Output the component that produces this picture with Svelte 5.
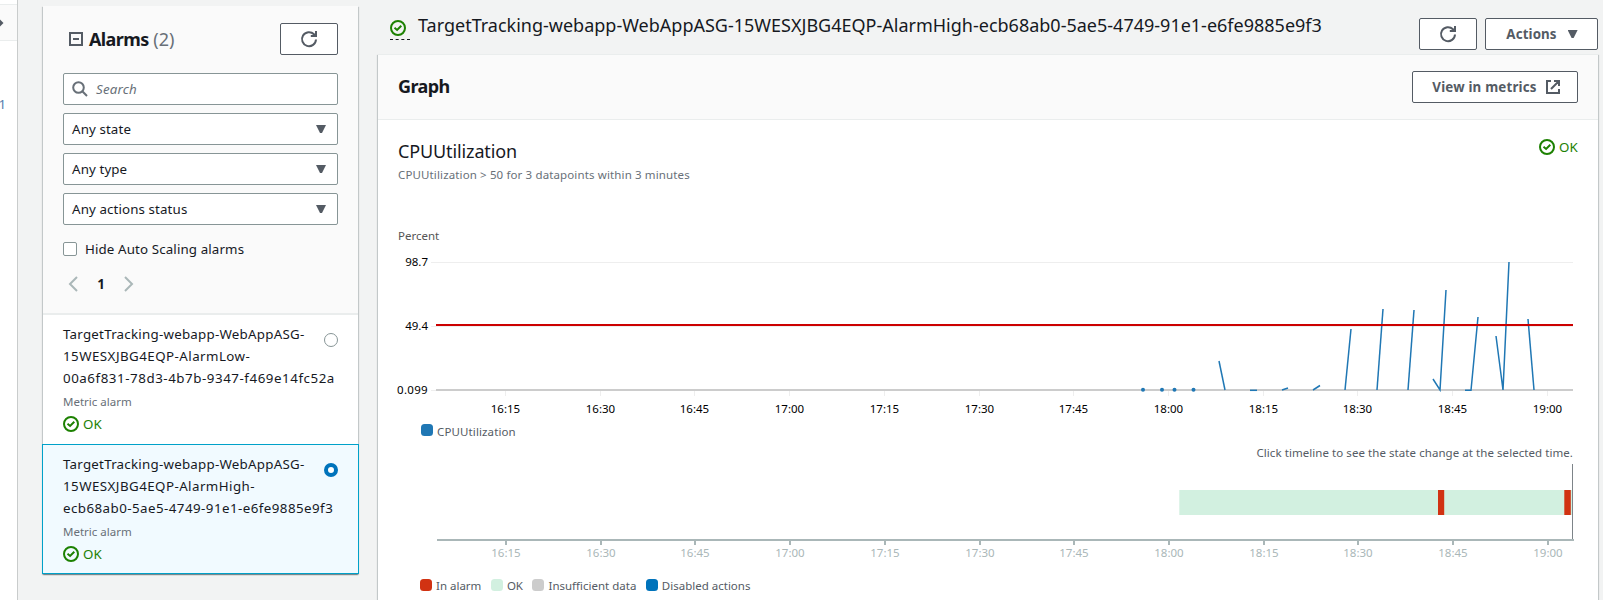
<script>
  const filters = ['Any state', 'Any type', 'Any actions status'];
  const alarms = [
    {
      lines: [
        { text: 'TargetTracking-webapp-WebAppASG-', track: 0.24 },
        { text: '15WESXJBG4EQP-AlarmLow-', track: 0.45 },
        { text: '00a6f831-78d3-4b7b-9347-f469e14fc52a', track: 0.55 }
      ],
      selected: false
    },
    {
      lines: [
        { text: 'TargetTracking-webapp-WebAppASG-', track: 0.24 },
        { text: '15WESXJBG4EQP-AlarmHigh-', track: 0.44 },
        { text: 'ecb68ab0-5ae5-4749-91e1-e6fe9885e9f3', track: 0.45 }
      ],
      selected: true
    }
  ];
  const labels = ['16:15', '16:30', '16:45', '17:00', '17:15', '17:30', '17:45', '18:00', '18:15', '18:30', '18:45', '19:00'];
  const ticks = labels.map((label, i) => ({ label, x: Math.floor(505.4 + i * 94.72) + 0.5 }));
  const series = [
    'M1219 361L1225 390', 'M1250 390.3H1257', 'M1282 390L1288 388', 'M1313 390L1320 385.5',
    'M1345 390L1351 329', 'M1377 390L1383 309', 'M1408 390L1414 310', 'M1433 379L1440 390L1446 290',
    'M1465 390.3H1471L1478 317', 'M1496 336L1503 390L1509 262', 'M1528 319L1534 390'
  ];
  const dots = [1143, 1162, 1174.5, 1193.5];
  const states = [
    { name: 'In alarm', color: '#d13212' },
    { name: 'OK', color: '#d2f0e0' },
    { name: 'Insufficient data', color: '#cccccc' },
    { name: 'Disabled actions', color: '#0073bb' }
  ];
</script>

{#snippet okIcon()}
  <svg class="ok-icon" width="16" height="16" viewBox="0 0 16 16" fill="none" stroke="#1d8102" stroke-width="2"><circle cx="8" cy="8" r="7" /><path d="M4.5 7.8l2.6 2.2L11.3 5.8" /></svg>
{/snippet}
{#snippet refreshIcon()}
  <svg width="18" height="18" viewBox="0 0 18 18" fill="none" stroke="#545b64" stroke-width="2"><path d="M16 9.5A7 7 0 1 1 14 4.3L15.4 5.7" /><path d="M16 1v5H10.8" /></svg>
{/snippet}

<div class="page">
  <div class="nav">
    <div class="nav-head"><svg width="4" height="8" viewBox="0 0 4 8"><path d="M0 0.5L3.5 4L0 7.5z" fill="#545b64" /></svg></div>
    <span class="nav-count">1</span>
  </div>

  <aside class="panel">
    <div class="panel-head">
      <div class="title-row">
        <svg width="14" height="14" viewBox="0 0 14 14" fill="none" stroke="#545b64" stroke-width="2"><path d="M1 1h12v12H1zM4 7h6" /></svg>
        <h2><span class="tight">Alarms</span> <span class="count">(2)</span></h2>
        <button class="btn refresh">{@render refreshIcon()}</button>
      </div>
      <div class="field search">
        <svg width="16" height="16" viewBox="0 0 16 16" fill="none" stroke="#687078" stroke-width="2"><circle cx="6.5" cy="6.5" r="5.3" /><path d="M10.3 10.3L15 15" /></svg>
        <span>Search</span>
      </div>
      {#each filters as f}
        <div class="field select"><span>{f}</span><i class="caret"></i></div>
      {/each}
      <div class="check"><i></i><span>Hide Auto Scaling alarms</span></div>
      <div class="pager">
        <svg width="10" height="16" viewBox="0 0 10 16" fill="none" stroke="#aab7b8" stroke-width="2"><path d="M9 1L2 8l7 7" /></svg>
        <b>1</b>
        <svg width="10" height="16" viewBox="0 0 10 16" fill="none" stroke="#aab7b8" stroke-width="2"><path d="M1 1l7 7-7 7" /></svg>
      </div>
    </div>
    {#each alarms as a}
      <div class="alarm" class:selected={a.selected}>
        <div class="name">{#each a.lines as line}<div style:letter-spacing="{line.track}px">{line.text}</div>{/each}</div>
        <i class="radio"></i>
        <div class="kind">Metric alarm</div>
        <div class="status">{@render okIcon()}<span>OK</span></div>
      </div>
    {/each}
  </aside>

  <main>
    <header>
      <span class="state">{@render okIcon()}</span>
      <h1>TargetTracking-webapp-WebAppASG-15WESXJBG4EQP-AlarmHigh-ecb68ab0-5ae5-4749-91e1-e6fe9885e9f3</h1>
      <button class="btn refresh">{@render refreshIcon()}</button>
      <button class="btn actions"><span>Actions</span><i class="caret"></i></button>
    </header>
    <section class="card">
      <div class="card-head">
        <h2 class="tight">Graph</h2>
        <button class="btn metrics"><span>View in metrics</span>
          <svg width="14" height="14" viewBox="0 0 14 14" fill="none" stroke="#545b64" stroke-width="2"><path d="M5 1H1v12h12V9M8 1h5v5M13 1L5 9" /></svg>
        </button>
      </div>
      <div class="metric-row">
        <div>
          <h3>CPUUtilization</h3>
          <p>CPUUtilization &gt; 50 for 3 datapoints within 3 minutes</p>
        </div>
        <div class="status">{@render okIcon()}<span>OK</span></div>
      </div>
      <svg class="chart" width="1220" height="195" viewBox="378 225 1220 195">
        <text class="unit" x="398" y="240">Percent</text>
        <path d="M431 262.5H1573M431 326.5H1573M431 390.5H436" stroke="#eee" />
        <path d="M436 390H1573" stroke="#ccc" stroke-width="2" />
        {#each ticks as t}
          <path d="M{t.x} 391v5" stroke="#eee" />
          <text x={t.x} y="413" text-anchor="middle">{t.label}</text>
        {/each}
        <g text-anchor="end">
          <text x="428" y="266">98.7</text>
          <text x="428" y="330">49.4</text>
          <text class="wide" x="428" y="394">0.099</text>
        </g>
        {#each series as d}<path {d} fill="none" stroke="#1f77b4" stroke-width="1.5" />{/each}
        {#each dots as x}<circle cx={x} cy="389.8" r="2" fill="#1f77b4" />{/each}
        <path d="M436 325H1573" stroke="#c00" stroke-width="2" />
      </svg>
      <div class="legend one"><span><i style:background="#1f77b4"></i><em>CPUUtilization</em></span></div>
      <div class="hint">Click timeline to see the state change at the selected time.</div>
      <svg class="timeline" width="1220" height="100" viewBox="378 464 1220 100">
        <path d="M1179.3 490H1573v25H1179.3z" fill="#d2f0e0" />
        <path d="M1438 490h6.2v25h-6.2zM1564.3 490h6.5v25h-6.5z" fill="#d13212" />
        <path d="M1572.5 464v75" stroke="#7d8489" />
        <path d="M437 540H1574" stroke="#aab7b8" stroke-width="2" />
        {#each ticks as t}
          <path d="M{t.x + 0.5} 541v4" stroke="#aab7b8" stroke-width="2" />
          <text x={t.x + 0.5} y="557" text-anchor="middle">{t.label}</text>
        {/each}
      </svg>
      <div class="legend">
        {#each states as s}<span><i style:background={s.color}></i><em>{s.name}</em></span>{/each}
      </div>
    </section>
  </main>
</div>

<style>
  :global(body) { margin: 0; }
  * { box-sizing: border-box; }
  .page { display: flex; width: 1603px; height: 600px; overflow: hidden; background: #f2f3f3; color: #16191f; font: 13.33px/22px "Noto Sans", sans-serif; }
  h1, h2, h3, p { margin: 0; font-weight: 400; }
  .nav { width: 18px; height: 600px; background: #fff; border-right: 1px solid #c9cccc; padding-top: 4px; flex: none; overflow: hidden; }
  .nav-head { height: 37px; background: #fafafa; border: solid #eaeded; border-width: 1px 0; display: flex; align-items: center; }
  .nav-count { display: block; margin: 52px 0 0 -1.5px; color: #5a7fae; }
  .panel, .card { background: #fff; box-shadow: 0 1px 1px 0 rgba(0,28,36,.3), 1px 1px 1px 0 rgba(0,28,36,.15), -1px 1px 1px 0 rgba(0,28,36,.15); }
  .panel { flex: none; align-self: flex-start; width: 315px; height: 568px; margin: 6px 0 0 25px; }
  .panel-head { height: 309px; padding: 17px 20px 0; background: #fafafa; border-bottom: 2px solid #eaeded; }
  .title-row { display: flex; align-items: center; height: 32px; margin-bottom: 18px; padding-left: 6px; }
  .title-row h2 { margin: 0 auto 0 6px; font-size: 18px; font-weight: 700; }
  .tight { letter-spacing: -.6px; }
  .count { font-weight: 400; color: #687078; }
  .btn { display: flex; align-items: center; justify-content: center; height: 32px; padding: 0; border: 1px solid #545b64; border-radius: 2px; background: #fff; color: #545b64; font: 700 13.33px "Noto Sans", sans-serif; flex: none; }
  .refresh { width: 58px; }
  .field { display: flex; align-items: center; height: 32px; margin-bottom: 8px; border: 1px solid #879596; border-radius: 2px; background: #fff; padding: 0 11px 0 8px; justify-content: space-between; letter-spacing: .11px; }
  .search { justify-content: flex-start; gap: 8px; color: #687078; font-style: italic; letter-spacing: .2px; }
  .caret { width: 10px; height: 8px; background: #545b64; clip-path: polygon(0 0, 100% 0, 60% 100%, 40% 100%); }
  .check { display: flex; align-items: center; gap: 8px; height: 22px; margin-top: 13px; letter-spacing: .12px; }
  .check i { width: 14px; height: 14px; border: 1px solid #879596; border-radius: 2px; background: #fff; }
  .pager { display: flex; align-items: center; justify-content: space-between; width: 66px; height: 22px; margin: 13px 0 0 5px; }
  .alarm { position: relative; height: 129px; padding: 8px 20px 0; }
  .alarm.selected { height: 130px; margin: 0 -1px; border: 1px solid #00a1c9; background: #f1faff; }
  .name { white-space: nowrap; }
  .radio { position: absolute; right: 20px; top: 18px; width: 14px; height: 14px; border: 1px solid #879596; border-radius: 50%; background: #fff; }
  .selected .radio { border: 4px solid #0073bb; }
  .kind { margin-top: 2px; font-size: 11.5px; color: #687078; }
  .status { display: flex; align-items: center; gap: 4px; color: #1d8102; letter-spacing: .2px; }
  .ok-icon { display: block; flex: none; }
  main { flex: none; width: 1221px; margin-left: 19px; }
  header { display: flex; width: 1221px; height: 54px; padding: 18px 0 0 13px; align-items: flex-start; }
  .state { width: 20px; height: 22px; padding-top: 2px; border-bottom: 1px dashed #16191f; }
  h1 { margin: -4px auto 0 8px; font-size: 18px; white-space: nowrap; }
  .actions { width: 113px; margin-left: 8px; padding-left: 1px; gap: 11px; letter-spacing: .1px; }
  .card { width: 1220px; margin-left: 1px; height: 560px; border-top: 1px solid #eaeded; }
  .card-head { display: flex; height: 65px; align-items: center; justify-content: space-between; padding: 0 20px; background: #fafafa; border-bottom: 1px solid #eaeded; }
  .card-head h2 { font-size: 18px; font-weight: 700; margin-top: -2px; }
  .metrics { width: 166px; padding-left: 2px; gap: 9px; letter-spacing: .19px; }
  .metric-row { display: flex; justify-content: space-between; padding: 16px 20px 0; height: 105px; }
  .metric-row .status { height: 22px; }
  h3 { font-size: 18px; line-height: 30px; letter-spacing: -.12px; }
  p { font-size: 11.5px; line-height: 18px; color: #687078; letter-spacing: .13px; }
  .chart, .timeline { display: block; }
  svg text { font-size: 11.5px; fill: #000; }
  .chart .unit { fill: #555; }
  .chart .wide { letter-spacing: .3px; }
  .timeline text { fill: #aab7b8; }
  .legend { display: flex; height: 22px; margin: 11px 0 0 42px; gap: 9.5px; font-size: 11.5px; color: #545b64; }
  .legend.one { height: 21px; margin: 1px 0 0 43px; letter-spacing: .12px; }
  .legend span { display: flex; align-items: center; gap: 4px; }
  .legend i { width: 12px; height: 12px; border-radius: 3.5px; margin-top: -3px; }
  .legend em { font-style: normal; }
  .hint { height: 22px; padding-right: 25px; text-align: right; font-size: 11.5px; letter-spacing: .06px; color: #545b64; }
</style>
